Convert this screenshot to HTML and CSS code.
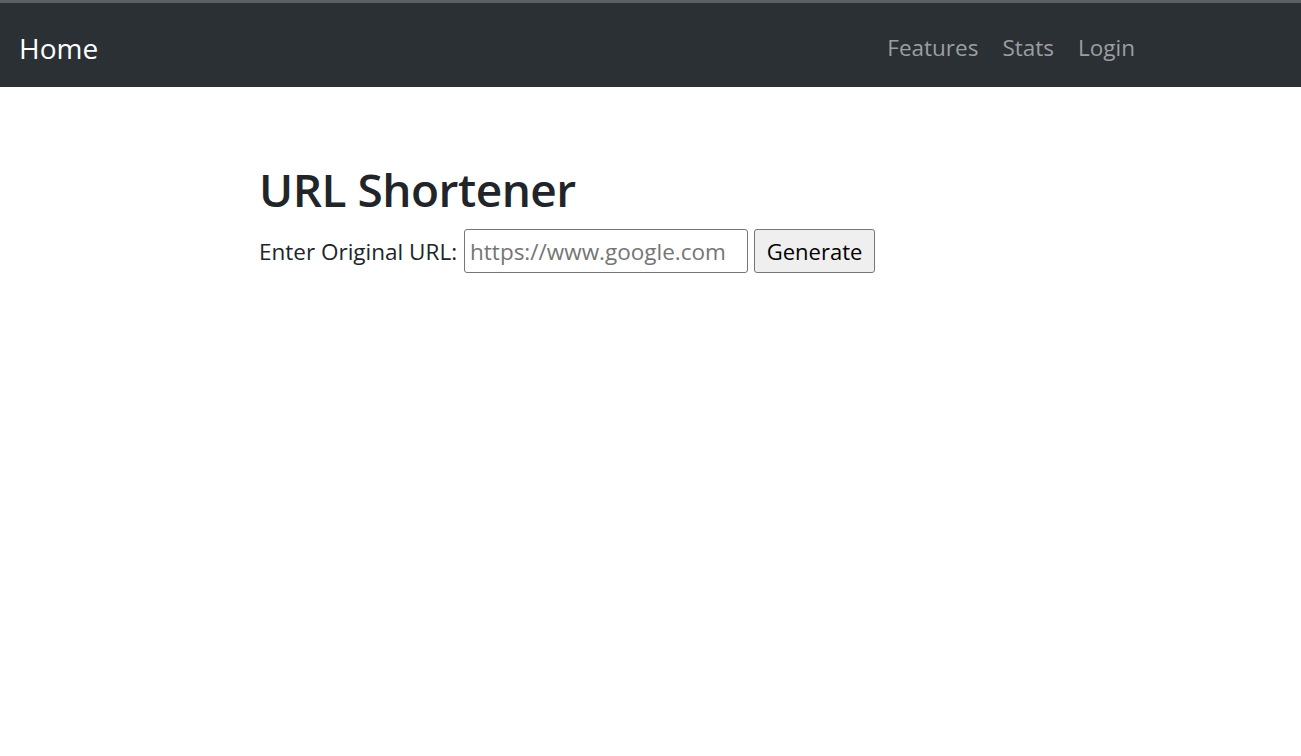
FILE: index.html
```html
<!DOCTYPE html>
<html lang="en">
<head>
<meta charset="utf-8">
<title>URL Shortener</title>
<link rel="stylesheet" href="styles.css">
</head>
<body>
<nav class="navbar">
  <a class="brand" href="#">Home</a>
  <ul class="nav-links">
    <li><a href="#">Features</a></li>
    <li><a href="#">Stats</a></li>
    <li><a href="#">Login</a></li>
  </ul>
</nav>
<main class="container">
  <h1 class="title">URL Shortener</h1>
  <form class="url-form">
    <label for="url" class="label">Enter Original URL:</label>
    <input id="url" class="url-input" type="text" placeholder="https://www.google.com">
    <button type="button" class="btn">Generate</button>
  </form>
</main>
</body>
</html>
```
FILE: styles.css
```css
* { box-sizing: border-box; }
html, body { margin: 0; padding: 0; background: #fff; }
body {
  font-family: "Open Sans", "Noto Sans", sans-serif;
  color: #212529;
  font-size: 22.5px;
}
.navbar {
  height: 87px;
  border-top: 3px solid #5d5f68;
  background: #2b3035;
  display: flex;
  align-items: center;
  padding: 5px 166px 0 19px;
}
.brand {
  color: #fff;
  text-decoration: none;
  font-size: 28px;
  line-height: 1;
}
.nav-links {
  list-style: none;
  margin: 0 0 0 auto;
  padding: 0;
  display: flex;
  gap: 24px;
}
.nav-links a {
  color: #9b9ea1;
  text-decoration: none;
  font-size: 22.5px;
}
.container {
  padding: 75px 0 0 259px;
}
.title {
  margin: 0;
  font-size: 46px;
  font-weight: 600;
  letter-spacing: -0.5px;
  line-height: 1.2;
}
.url-form {
  display: flex;
  align-items: center;
  margin-top: 12px;
}
.label { font-size: 22.5px; margin-right: 7px; }
.url-input {
  width: 284px;
  height: 44px;
  border: 1px solid #767676;
  border-radius: 3px;
  font-family: inherit;
  font-size: 22.5px;
  padding: 0 5px;
  color: #212529;
}
.url-input::placeholder { color: #757575; }
.btn {
  margin-left: 6px;
  height: 44px;
  width: 121px;
  border: 1px solid #767676;
  border-radius: 3px;
  background: #efefef;
  font-family: inherit;
  font-size: 22px;
  color: #000;
  padding: 0;
}
```
